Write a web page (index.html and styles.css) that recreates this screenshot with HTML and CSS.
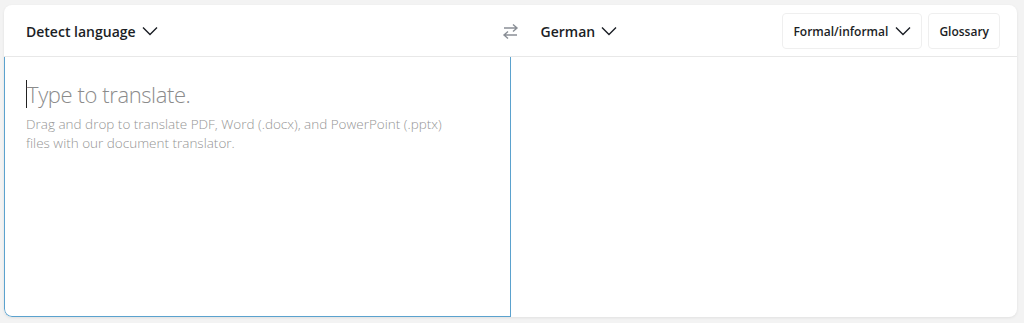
FILE: index.html
```html
<!DOCTYPE html>
<html lang="en">
<head>
<meta charset="UTF-8">
<meta name="viewport" content="width=device-width, initial-scale=1.0">
<title>Translator</title>
<link rel="stylesheet" href="styles.css">
</head>
<body>

<div class="card">
<div class="header">
<div class="side source">
<button class="lang">Detect language
<svg class="chev" width="16" height="10" viewBox="0 0 16 10"><path d="M1 1.5l7 7 7-7" fill="none" stroke="#1b1e25" stroke-width="1.4"/></svg>
</button>
<span class="swap">
<svg width="17" height="17" viewBox="0 0 17 17"><path d="M2 5h13M11 1.5l4 3.5-4 3.5M15 12H2M6 8.5l-4 3.5 4 3.5" fill="none" stroke="#8a8f96" stroke-width="1.4"/></svg>
</span>
</div>
<div class="side target">
<button class="lang">German
<svg class="chev" width="16" height="10" viewBox="0 0 16 10"><path d="M1 1.5l7 7 7-7" fill="none" stroke="#1b1e25" stroke-width="1.4"/></svg>
</button>
<div class="tools">
<button class="tool">Formal/informal
<svg class="chev" width="16" height="10" viewBox="0 0 16 10"><path d="M1 1.5l7 7 7-7" fill="none" stroke="#1b1e25" stroke-width="1.4"/></svg>
</button>
<button class="tool">Glossary</button>
</div>
</div>
</div>
<div class="panels">
<div class="input">
<div class="placeholder"><span class="caret"></span>Type to translate.</div>
<p class="hint">Drag and drop to translate PDF, Word (.docx), and PowerPoint (.pptx) files with our document translator.</p>
</div>
<div class="output"></div>
</div>
</div>

</body>
</html>
```

FILE: styles.css
```css
* {
box-sizing: border-box;
}
body {
font-family: "Open Sans", "Noto Sans", sans-serif;
background-color: #f3f3f3;
margin: 0;
padding: 5px 7px 6px 4px;
}
.card {
background-color: white;
border-radius: 8px;
box-shadow: 0 1px 3px rgba(0, 0, 0, 0.08);
height: 312px;
display: flex;
flex-direction: column;
overflow: hidden;
}
.header {
display: grid;
grid-template-columns: minmax(0, 1fr) minmax(0, 1fr);
height: 52px;
padding-top: 1px;
border-bottom: 1px solid #e8e8e8;
}
.side {
display: flex;
align-items: center;
}
.source {
padding-left: 22px;
}
.target {
padding-left: 30px;
padding-right: 17px;
}
button {
font-family: inherit;
background: none;
border: none;
cursor: pointer;
display: flex;
align-items: center;
color: #1b1e25;
}
.lang {
font-size: 14px;
font-weight: 600;
padding: 0;
gap: 6px;
}
.swap {
margin-left: auto;
margin-right: -8px;
display: flex;
}
.tools {
margin-left: auto;
display: flex;
gap: 6px;
}
.tool {
font-size: 12px;
font-weight: 600;
height: 36px;
padding: 0 10px;
gap: 7px;
border: 1px solid #efefef;
border-radius: 4px;
}
.tool:first-child {
padding: 0 10px 0 10px;
}
.panels {
flex: 1;
display: grid;
grid-template-columns: minmax(0, 1fr) minmax(0, 1fr);
}
.input {
border: 1px solid #5ba2ce;
border-top: none;
border-radius: 0 0 0 8px;
padding: 22px 21px;
}
.placeholder {
font-size: 22px;
letter-spacing: -0.4px;
font-weight: 300;
color: #8b8b8b;
display: flex;
align-items: center;
}
.caret {
width: 1px;
height: 28px;
background: #222;
}
.hint {
font-size: 13.5px;
font-weight: 300;
color: #959595;
line-height: 19px;
margin: 6px 0 0;
width: 440px;
}
```
